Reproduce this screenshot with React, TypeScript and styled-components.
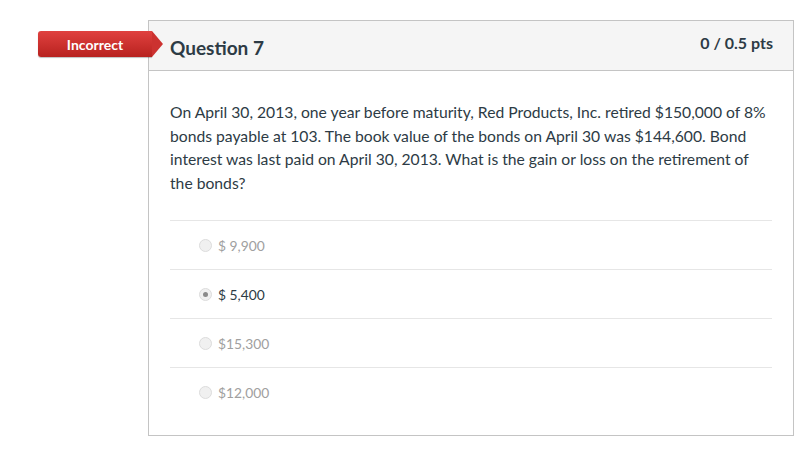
import React from 'react';
import styled, { createGlobalStyle } from 'styled-components';

const GlobalStyle = createGlobalStyle`
  body {
    margin: 0;
    background: #fff;
    font-family: Lato, "Open Sans", sans-serif;
    color: #2d3b45;
  }
`;

interface IAnswer {
  id: number;
  label: string;
  selected: boolean;
}

const answers: IAnswer[] = [
  { id: 1, label: '$ 9,900', selected: false },
  { id: 2, label: '$ 5,400', selected: true },
  { id: 3, label: '$15,300', selected: false },
  { id: 4, label: '$12,000', selected: false },
];

export default function App() {
  return (
    <Page>
      <GlobalStyle />
      <QuestionCard>
        <Badge>Incorrect</Badge>
        <Header>
          <Title>Question 7</Title>
          <Points>0 / 0.5 pts</Points>
        </Header>
        <Body>
          <QuestionText>
            On April 30, 2013, one year before maturity, Red Products, Inc. retired $150,000 of 8%
            bonds payable at 103. The book value of the bonds on April 30 was $144,600. Bond
            interest was last paid on April 30, 2013. What is the gain or loss on the retirement of
            the bonds?
          </QuestionText>
          <AnswerList>
            {answers.map((answer) => (
              <AnswerRow key={answer.id}>
                <Radio $checked={answer.selected} />
                <AnswerLabel $selected={answer.selected}>{answer.label}</AnswerLabel>
              </AnswerRow>
            ))}
          </AnswerList>
        </Body>
      </QuestionCard>
    </Page>
  );
}

const Page = styled.div`
  padding: 20px 3px 16px 148px;
  width: 797px;
  box-sizing: border-box;
`;

const QuestionCard = styled.div`
  position: relative;
  width: 646px;
  border: 1px solid #c4c4c4;
  box-sizing: border-box;
`;

const Badge = styled.div`
  position: absolute;
  top: 10px;
  left: -111px;
  width: 114px;
  height: 26px;
  box-sizing: border-box;
  display: flex;
  align-items: center;
  justify-content: center;
  background: linear-gradient(#e0413f, #b8221f);
  border-radius: 3px 0 0 3px;
  color: #fff;
  font-size: 14px;
  font-weight: 700;
  box-shadow: 0 1px 1px rgba(0, 0, 0, 0.25);
  &::after {
    content: '';
    position: absolute;
    right: -11px;
    top: 0;
    border-top: 13px solid transparent;
    border-bottom: 13px solid transparent;
    border-left: 11px solid #cc3230;
  }
`;

const Header = styled.div`
  height: 49px;
  display: flex;
  align-items: center;
  justify-content: space-between;
  padding: 0 20px 0 21px;
  background: #f5f5f5;
  border-bottom: 1px solid #c4c4c4;
`;

const Title = styled.h2`
  margin: 4px 0 0;
  font-size: 19px;
  font-weight: 700;
  color: #2d3b45;
`;

const Points = styled.div`
  align-self: flex-start;
  margin-top: 12px;
  font-size: 16px;
  font-weight: 700;
  color: #2d3b45;
`;

const Body = styled.div`
  padding: 30px 21px 19px 21px;
`;

const QuestionText = styled.p`
  margin: 0 0 25px;
  font-size: 15.7px;
  line-height: 23.5px;
  color: #2d3b45;
`;

const AnswerList = styled.div`
  display: flex;
  flex-direction: column;
`;

const AnswerRow = styled.div`
  height: 48px;
  display: flex;
  align-items: center;
  padding-left: 29px;
  border-top: 1px solid #e6e6e6;
`;

const Radio = styled.span<{ $checked: boolean }>`
  position: relative;
  width: 11px;
  height: 11px;
  border-radius: 50%;
  border: 1px solid #dcdcdc;
  background: #f0f0f0;
  margin-right: 6px;
  &::after {
    content: '';
    display: ${(p) => (p.$checked ? 'block' : 'none')};
    position: absolute;
    top: 3px;
    left: 3px;
    width: 5px;
    height: 5px;
    border-radius: 50%;
    background: #8a8a8a;
  }
`;

const AnswerLabel = styled.span<{ $selected: boolean }>`
  font-size: 13.8px;
  color: ${(p) => (p.$selected ? '#2d3b45' : '#a0a0a0')};
`;
